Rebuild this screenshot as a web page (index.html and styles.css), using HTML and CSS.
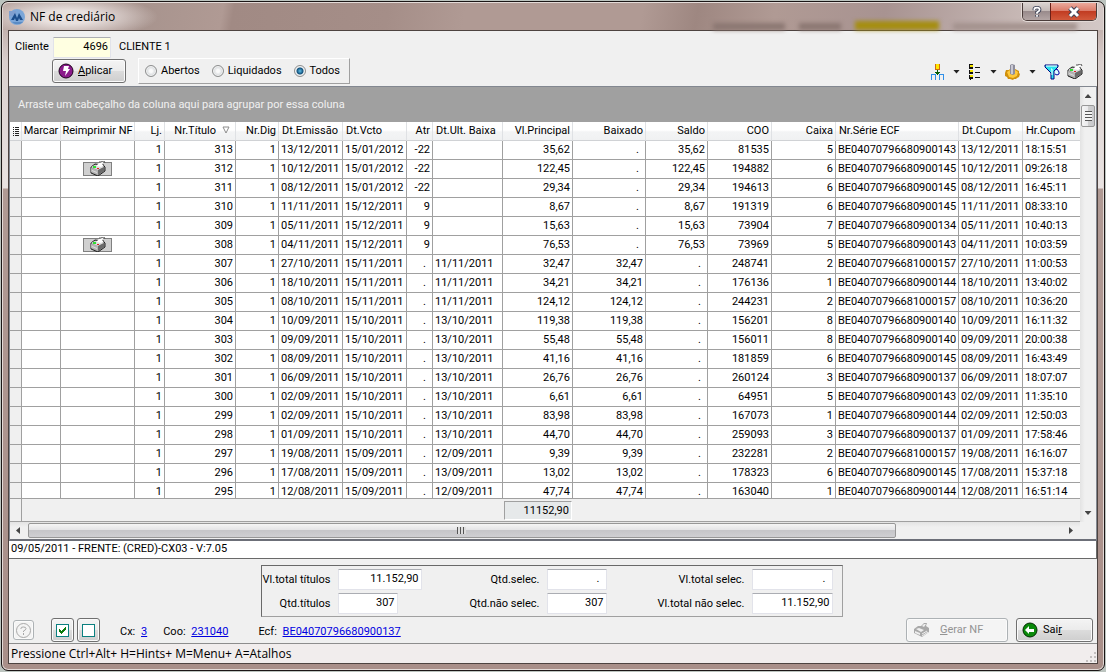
FILE: index.html
```html
<!DOCTYPE html>
<html lang="pt-BR">
<head>
    <meta charset="UTF-8">
    <meta name="viewport" content="width=device-width, initial-scale=1.0">
    <title>NF de crediário</title>
    <link rel="stylesheet" href="styles.css">
</head>
<body>

<!-- Shared icons -->
<svg class="icon-defs" aria-hidden="true">
    <symbol id="printer" viewBox="0 0 16 15">
        <path d="M1 6l4-3 8 1 2 2v4l-7 5-7-3z" fill="#9a9a9a" stroke="#222"/>
        <path d="M1 6l4-2 9 2-6 3z" fill="#dcdcdc"/>
        <path d="M1 7l7 2v5l-7-3z" fill="#b4b4b4"/>
        <path d="M8 9l6-3v4l-6 4z" fill="#6b6b6b"/>
        <path d="M6 5l3-3 5-2-2 3 2 2-3 1z" fill="#fff"/>
        <path d="M9 1h2l2-1h1l1 2M13 3l1 2" fill="none" stroke="#555"/>
        <path d="M3 5h3v2H3z" fill="#2fe02f"/>
        <path d="M7 7h2v1H7z" fill="#e02020"/>
        <path d="M2 9l5 2v1L2 10z" fill="#ddd"/>
    </symbol>
    <symbol id="printer-off" viewBox="0 0 17 16">
        <path d="M1 7l4-3h3l3-3h3l-1 3 3 2v4l-7 5-8-4z" fill="#a9a9a9"/>
        <path d="M3 7l3-1 5 2-3 2zM2 9l5 2v2l-5-2zM9 4l2-2h2l-2 3z" fill="#efefef"/>
        <path d="M9 12l5-3M9 14l6-4" stroke="#efefef"/>
    </symbol>
</svg>

<div class="window">
    <header class="titlebar">
        <svg class="app-icon" viewBox="0 0 16 16">
            <circle cx="8" cy="8" r="8" fill="#7ba6d8"/>
            <path d="M0 2h7v5H0z" fill="#7f9fcf"/>
            <path d="M2 11l4-7 2 5 2-5 4 7h-3l-1-2-1 3H7L6 9l-1 2z" fill="#1c4e8c"/>
            <path d="M3 13h11l-3 2H6z" fill="#5a8bc4"/>
        </svg>
        <h1>NF de crediário</h1>
        <div class="behind">
            <span class="smudge"></span>
            <span class="smudge short"></span>
            <span class="smudge yellow"></span>
            <span class="smudge wide"></span>
        </div>
        <div class="caption-buttons">
            <button class="caption-help" type="button" aria-label="Ajuda">
                <svg width="12" height="14" viewBox="0 -1 12 16"><path d="M3 5V3.500Q3 2 6 2t3 2.500Q9 6 6 7.500V9M6 10.500v2" fill="none" stroke="#3c4257" stroke-width="4"/><path d="M3 5V3.500Q3 2 6 2t3 2.500Q9 6 6 7.500V9M6 10.500v2" fill="none" stroke="#fff" stroke-width="2"/></svg>
            </button>
            <button class="caption-close" type="button" aria-label="Fechar">
                <svg width="14" height="12" viewBox="0 0 14 12"><path d="M3 2l8 8M11 2l-8 8" stroke="#3c4257" stroke-width="5"/><path d="M3 2l8 8M11 2l-8 8" stroke="#fff" stroke-width="3"/></svg>
            </button>
        </div>
    </header>

    <main class="client">
        <!-- Filter -->
        <form class="filter" onsubmit="return false">
            <div class="filter-row">
                <label for="cliente">Cliente</label>
                <input id="cliente" class="field cliente" type="text" value="4696">
                <span>CLIENTE 1</span>
            </div>
            <div class="filter-row second">
                <button class="btn aplicar" type="submit">
                    <svg width="16" height="16" viewBox="0 0 16 16">
                        <circle cx="8" cy="8" r="7" fill="#8b1a8b" stroke="#1c001c"/>
                        <path d="M6 3h5l-1 3h2l-5 7 1-5H5z" fill="#fff"/>
                    </svg>
                    <span><u>A</u>plicar</span>
                </button>
                <div class="radios">
                    <label><input type="radio" name="tipo">Abertos</label>
                    <label><input type="radio" name="tipo">Liquidados</label>
                    <label><input type="radio" name="tipo" checked>Todos</label>
                </div>
                <div class="toolbar">
                    <button type="button" aria-label="Agrupar">
                        <svg width="13" height="16" viewBox="0 0 13 16" shape-rendering="crispEdges">
                            <path d="M4 0h5v6H4z" fill="#d06a10"/><path d="M5 0h3v5H5z" fill="#ffe800"/>
                            <path d="M6 6h1v2h2v1H8v1H5V9H4V8h2z" fill="#075c07"/>
                            <path d="M0 10h5v6H4v-5H1v5H0zM8 10h5v6h-1v-5H9v5H8z" fill="#2f8fe8"/>
                            <path d="M6 10h1v1H6z" fill="#075c07"/>
                        </svg>
                    </button>
                    <button type="button" class="drop" aria-label="Opções de grupo"></button>
                    <button type="button" aria-label="Colunas">
                        <svg width="13" height="16" viewBox="0 0 13 16" shape-rendering="crispEdges">
                            <path d="M1 0h4v5H1zM1 6h4v4H1zM1 11h4v4H1z" fill="#111"/>
                            <path d="M2 1h3v2H2zM2 6h3v2H2zM2 11h3v2H2z" fill="#f5e400"/>
                            <path d="M2 15h1v1H2zM7 3h5v1H7zM7 8h5v1H7zM7 13h5v1H7z" fill="#111"/>
                        </svg>
                    </button>
                    <button type="button" class="drop" aria-label="Opções de colunas"></button>
                    <button type="button" aria-label="Configurar">
                        <svg width="15" height="16" viewBox="0 0 15 16">
                            <path d="M1 6l3 0 1-1h5l2 1 2 1v2l1 1-1 3-2 1-1 1H9l-1 1-3-1-2 0-1-2-2-1V9z" fill="#d0900c"/>
                            <path d="M2 8l3-2h5l3 2-1 4-4 2-4-1z" fill="#ffc93b"/>
                            <path d="M5 1l2-1 3 1v9l-2 1-3-1z" fill="#8e8e9c"/>
                            <path d="M6 1h2v9H6z" fill="#c9c9d4"/>
                        </svg>
                    </button>
                    <button type="button" class="drop" aria-label="Opções de configuração"></button>
                    <button type="button" aria-label="Filtrar">
                        <svg width="16" height="16" viewBox="0 0 16 16">
                            <path d="M1 1h13v2l-4 4v8H7V9L1 3z" fill="#28e3ee" stroke="#000080"/>
                            <path d="M2 2h11" stroke="#fff"/>
                            <path d="M7 5h1v6" stroke="#fff" fill="none"/>
                            <path d="M11 6l2-1 2 3v2l-2 1-2-1" fill="#dff" stroke="#0000a0"/>
                        </svg>
                    </button>
                    <button type="button" class="tool-print" aria-label="Imprimir"><svg width="16" height="15"><use href="#printer"/></svg></button>
                </div>
            </div>
        </form>

        <!-- Grid -->
        <section class="grid">
            <div class="grid-top">
                <div class="grid-main">
                    <div class="group-bar">Arraste um cabeçalho da coluna aqui para agrupar por essa coluna</div>
                    <div class="grid-body">
                        <table>
                            <colgroup>
                                <col class="w12"><col class="w39"><col class="w74"><col class="w30"><col class="w71">
                                <col class="w43"><col class="w64"><col class="w64"><col class="w26"><col class="w70">
                                <col class="w70"><col class="w73"><col class="w62"><col class="w64"><col class="w64">
                                <col class="w123"><col class="w64"><col>
                            </colgroup>
                            <thead>
                                <tr>
                                    <th aria-label="Indicador"><svg width="7" height="9" viewBox="0 0 7 9" shape-rendering="crispEdges"><path d="M0 0h1v1H0zM0 2h1v1H0zM0 4h1v1H0zM0 6h1v1H0zM0 8h1v1H0zM2 0h4v1H2zM2 2h4v1H2zM2 4h4v1H2zM2 6h4v1H2zM2 8h4v1H2z" fill="#222"/></svg></th>
                                    <th class="center">Marcar</th>
                                    <th class="center">Reimprimir NF</th>
                                    <th class="num">Lj.</th>
                                    <th class="num sorted">Nr.Título<svg width="8" height="8" viewBox="0 0 8 8"><path d="M1 1h6L4 7z" fill="#fff" stroke="#8c8c8c"/></svg></th>
                                    <th class="num">Nr.Dig</th>
                                    <th>Dt.Emissão</th>
                                    <th>Dt.Vcto</th>
                                    <th class="num">Atr</th>
                                    <th>Dt.Ult. Baixa</th>
                                    <th class="num">Vl.Principal</th>
                                    <th class="num">Baixado</th>
                                    <th class="num">Saldo</th>
                                    <th class="num">COO</th>
                                    <th class="num">Caixa</th>
                                    <th>Nr.Série ECF</th>
                                    <th>Dt.Cupom</th>
                                    <th>Hr.Cupom</th>
                                </tr>
                            </thead>
                            <tbody id="titulos"></tbody>
                            <tfoot>
                                <tr>
                                    <td></td>
                                    <td colspan="9"></td>
                                    <td><div class="sum">11152,90</div></td>
                                    <td colspan="7"></td>
                                </tr>
                            </tfoot>
                        </table>
                    </div>
                </div>
                <div class="vscroll">
                    <i class="arrow up"></i>
                    <div class="thumb"></div>
                    <i class="arrow down"></i>
                </div>
            </div>
            <div class="hscroll">
                <i class="arrow left"></i>
                <div class="track"><div class="thumb"></div></div>
                <i class="arrow right"></i>
            </div>
        </section>

        <div class="info">09/05/2011 - FRENTE: (CRED)-CX03 - V:7.05</div>

        <!-- Totals -->
        <section class="totals">
            <label for="vlTitulos">Vl.total títulos</label>
            <input id="vlTitulos" class="field" type="text" value="11.152,90" readonly>
            <label for="qtdSelec">Qtd.selec.</label>
            <input id="qtdSelec" class="field dot" type="text" value="." readonly>
            <label for="vlSelec">Vl.total selec.</label>
            <input id="vlSelec" class="field dot" type="text" value="." readonly>
            <label for="qtdTitulos">Qtd.títulos</label>
            <input id="qtdTitulos" class="field short" type="text" value="307" readonly>
            <label for="qtdNaoSelec">Qtd.não selec.</label>
            <input id="qtdNaoSelec" class="field" type="text" value="307" readonly>
            <label for="vlNaoSelec">Vl.total não selec.</label>
            <input id="vlNaoSelec" class="field" type="text" value="11.152,90" readonly>
        </section>

        <div class="actions">
            <button class="btn help" type="button" disabled aria-label="Ajuda">
                <svg width="17" height="17" viewBox="0 0 17 17"><circle cx="8.500" cy="8.500" r="7" fill="none" stroke="#a8a8a8"/><path d="M6 7V6q0-1 2.500-1T11 6.500Q11 8 8.500 9v1M8.500 11v2" fill="none" stroke="#a8a8a8"/></svg>
            </button>
            <button class="btn square" type="button" aria-label="Marcar todos">
                <svg width="13" height="13" viewBox="0 0 13 13" shape-rendering="crispEdges"><path d="M0 0h13v13H0z" fill="#0a8080"/><path d="M1 1h11v11H1z" fill="#fff"/><path d="M3 5h1v1h1v1h1V6h1V5h1V4h1V3h1v3H9v1H8v1H7v1H6v1H5V9H4V8H3z" fill="#0b7a0b"/></svg>
            </button>
            <button class="btn square" type="button" aria-label="Desmarcar todos">
                <svg width="13" height="13" viewBox="0 0 13 13" shape-rendering="crispEdges"><path d="M0 0h13v13H0z" fill="#0a8080"/><path d="M1 1h11v11H1z" fill="#fff"/></svg>
            </button>
            <div class="refs">
                <span>Cx: <a href="#">3</a></span>
                <span>Coo: <a href="#">231040</a></span>
                <span class="ecf">Ecf: <a href="#">BE04070796680900137</a></span>
            </div>
            <button class="btn gerar" type="button" disabled>
                <svg width="17" height="16"><use href="#printer-off"/></svg>
                <span><u>G</u>erar NF</span>
            </button>
            <button class="btn sair" type="button">
                <svg width="16" height="16" viewBox="0 0 16 16"><circle cx="8" cy="8" r="7" fill="#0a8a0a" stroke="#022d02"/><path d="M3 8l4-4v3h5v3H7v2z" fill="#fff"/></svg>
                <span>Sai<u>r</u></span>
            </button>
        </div>

        <footer class="status">
            <span>Pressione Ctrl+Alt+ H=Hints+ M=Menu+ A=Atalhos</span>
            <svg class="grip" width="10" height="10" viewBox="0 0 10 10"><path d="M8 0h2v2H8zM4 4h2v2H4zM8 4h2v2H8zM0 8h2v2H0zM4 8h2v2H4zM8 8h2v2H8z" fill="#c3bfbf"/></svg>
        </footer>
    </main>
</div>

<script>
// titulo, emissao, vcto, atr, ult. baixa, principal, baixado, saldo, coo, caixa, serie, cupom, reimprimir
var titulos = [
    ['313', '13/12/2011', '15/01/2012', '-22', '', '35,62', '.', '35,62', '81535', '5', 'BE04070796680900143', '18:15:51'],
    ['312', '10/12/2011', '15/01/2012', '-22', '', '122,45', '.', '122,45', '194882', '6', 'BE04070796680900145', '09:26:18', true],
    ['311', '08/12/2011', '15/01/2012', '-22', '', '29,34', '.', '29,34', '194613', '6', 'BE04070796680900145', '16:45:11'],
    ['310', '11/11/2011', '15/12/2011', '9', '', '8,67', '.', '8,67', '191319', '6', 'BE04070796680900145', '08:33:10'],
    ['309', '05/11/2011', '15/12/2011', '9', '', '15,63', '.', '15,63', '73904', '7', 'BE04070796680900134', '10:40:13'],
    ['308', '04/11/2011', '15/12/2011', '9', '', '76,53', '.', '76,53', '73969', '5', 'BE04070796680900143', '10:03:59', true],
    ['307', '27/10/2011', '15/11/2011', '.', '11/11/2011', '32,47', '32,47', '.', '248741', '2', 'BE04070796681000157', '11:00:53'],
    ['306', '18/10/2011', '15/11/2011', '.', '11/11/2011', '34,21', '34,21', '.', '176136', '1', 'BE04070796680900144', '13:40:02'],
    ['305', '08/10/2011', '15/11/2011', '.', '11/11/2011', '124,12', '124,12', '.', '244231', '2', 'BE04070796681000157', '10:36:20'],
    ['304', '10/09/2011', '15/10/2011', '.', '13/10/2011', '119,38', '119,38', '.', '156201', '8', 'BE04070796680900140', '16:11:32'],
    ['303', '09/09/2011', '15/10/2011', '.', '13/10/2011', '55,48', '55,48', '.', '156011', '8', 'BE04070796680900140', '20:00:38'],
    ['302', '08/09/2011', '15/10/2011', '.', '13/10/2011', '41,16', '41,16', '.', '181859', '6', 'BE04070796680900145', '16:43:49'],
    ['301', '06/09/2011', '15/10/2011', '.', '13/10/2011', '26,76', '26,76', '.', '260124', '3', 'BE04070796680900137', '18:07:07'],
    ['300', '02/09/2011', '15/10/2011', '.', '13/10/2011', '6,61', '6,61', '.', '64951', '5', 'BE04070796680900143', '11:35:10'],
    ['299', '02/09/2011', '15/10/2011', '.', '13/10/2011', '83,98', '83,98', '.', '167073', '1', 'BE04070796680900144', '12:50:03'],
    ['298', '01/09/2011', '15/10/2011', '.', '13/10/2011', '44,70', '44,70', '.', '259093', '3', 'BE04070796680900137', '17:58:46'],
    ['297', '19/08/2011', '15/09/2011', '.', '12/09/2011', '9,39', '9,39', '.', '232281', '2', 'BE04070796681000157', '16:16:07'],
    ['296', '17/08/2011', '15/09/2011', '.', '13/09/2011', '13,02', '13,02', '.', '178323', '6', 'BE04070796680900145', '15:37:18'],
    ['295', '12/08/2011', '15/09/2011', '.', '12/09/2011', '47,74', '47,74', '.', '163040', '1', 'BE04070796680900144', '16:51:14']
];

function num(v) {
    return '<td class="num' + (v === '.' ? ' dot' : '') + '">' + v + '</td>';
}

function txt(v) {
    return '<td>' + v + '</td>';
}

document.getElementById('titulos').innerHTML = titulos.map(function(t) {
    var print = t[12] ? '<button class="reprint" type="button" aria-label="Reimprimir ' + t[0] + '"><svg width="16" height="15"><use href="#printer"/></svg></button>' : '';
    return '<tr><td></td><td></td><td class="center">' + print + '</td>' +
        num('1') + num(t[0]) + num('1') + txt(t[1]) + txt(t[2]) + num(t[3]) + txt(t[4]) +
        num(t[5]) + num(t[6]) + num(t[7]) + num(t[8]) + num(t[9]) +
        txt(t[10]) + txt(t[1]) + txt(t[11]) + '</tr>';
}).join('');
</script>

</body>
</html>
```

FILE: styles.css
```css
/* General styles */
* {
    box-sizing: border-box;
}

body {
    margin: 0;
    padding: 1px;
    height: 100vh;
    background-color: #bcc4bf;
    font-family: Roboto, "Liberation Sans", Arial, sans-serif;
    font-size: 11px;
    line-height: 14px;
    color: #000;
}

button, input {
    font: inherit;
    color: inherit;
}

button {
    padding: 0;
}

svg {
    display: block;
    flex: none;
}

.icon-defs {
    position: absolute;
    width: 0;
    height: 0;
}

/* Window frame */
.window {
    display: flex;
    flex-direction: column;
    height: 100%;
    padding: 0 6px 6px;
    border: 1px solid #1b1616;
    border-radius: 7px;
    background: linear-gradient(#b09a94 0, #d9cfcd 60px, #e9e3e2 186px, #b09a94 187px, #a98f89 100%);
    box-shadow: inset 0 0 0 1px #e3dad7;
    overflow: hidden;
}

.titlebar {
    position: relative;
    display: flex;
    align-items: center;
    height: 28px;
    margin: 0 -5px;
    padding-left: 6px;
    background:
        radial-gradient(ellipse 90px 22px at 65px 14px, #e9e1df 30%, transparent),
        linear-gradient(100deg, #b5a19c 0, #a8948e 13%, #b09a94 20%, #a18a84 21%, #a58e88 35%, #b09a94 42%, #b09a94 58%, #9e8781 63%, #b09a94 70%, #a89391 80%, #c6b7b4 92%, #d3c8c6 100%);
    border-top: 1px solid #e3dad7;
    border-radius: 6px 6px 0 0;
}

.app-icon {
    width: 16px;
    height: 16px;
}

.titlebar h1 {
    margin: 0 0 0 5px;
    font: 12px/18px "Open Sans", "Noto Sans", sans-serif;
}

/* Text of the window behind, seen through the glass */
.behind {
    position: absolute;
    right: 26px;
    bottom: 0;
    display: flex;
    align-items: flex-end;
    gap: 14px;
    filter: blur(2px);
}

.smudge {
    width: 72px;
    height: 7px;
    background-color: #8b7772;
}

.smudge.short {
    width: 42px;
}

.smudge.yellow {
    width: 84px;
    height: 9px;
    background-color: #a58e10;
}

.smudge.wide {
    width: 124px;
    background-color: #a3928e;
}

.caption-buttons {
    position: relative;
    display: flex;
    align-self: flex-start;
    height: 18px;
    margin-left: auto;
    margin-right: 6px;
    border: 1px solid #4a3c3a;
    border-top: 0;
    border-radius: 0 0 5px 5px;
    box-shadow: 0 0 0 1px #e3dad7;
    overflow: hidden;
}

.caption-buttons button {
    display: flex;
    align-items: center;
    justify-content: center;
    border: 0;
}

.caption-help {
    width: 27px;
    background: linear-gradient(#d9d2cf 0, #c4bab7 45%, #97898a 46%, #b3a5a4 100%);
}

.caption-close {
    width: 46px;
    background: linear-gradient(#eba99b 0, #dc7d6b 45%, #c03a20 46%, #d25a3c 100%);
}

.caption-buttons .caption-close {
    border-left: 1px solid #6b2018;
}

.client {
    display: flex;
    flex-direction: column;
    flex: 1;
    min-height: 0;
    border: 1px solid #4d4340;
    background-color: #f0f0f0;
}

/* Fields and buttons */
.field {
    width: 100%;
    height: 21px;
    padding: 0 2px 2px;
    border: 1px solid #e2e3ea;
    border-top-color: #abadb3;
    border-radius: 1px;
    background-color: #fff;
    text-align: right;
}

.btn {
    display: flex;
    align-items: center;
    height: 24px;
    border: 1px solid #707070;
    border-radius: 3px;
    background: linear-gradient(#f4f4f4 0, #ebebeb 50%, #dcdcdc 51%, #cecece 100%);
    box-shadow: inset 0 0 0 1px #fbfbfb;
}

.btn:disabled {
    border-color: #adb2b5;
    background: #f4f4f4;
    color: #939393;
}

/* Filter */
.filter {
    height: 55px;
    padding: 6px 14px 0 6px;
}

.filter-row {
    display: flex;
    align-items: center;
    height: 20px;
}

.filter-row .cliente {
    width: 58px;
    margin: 0 8px 0 6px;
    background-color: #ffffe1;
}

.filter-row label[for] {
    width: 32px;
}

.filter-row.second {
    height: 27px;
    padding-left: 37px;
}

.aplicar {
    width: 74px;
    gap: 4px;
    padding-left: 5px;
}

.radios {
    display: flex;
    align-items: center;
    gap: 12px;
    height: 26px;
    margin-left: 12px;
    padding: 0 9px 0 6px;
    border: 1px solid #fff;
    border-right-color: #a0a0a0;
    border-bottom-color: #a0a0a0;
}

.radios label {
    display: flex;
    align-items: center;
    gap: 4px;
}

.radios input {
    appearance: none;
    width: 12px;
    height: 12px;
    margin: 0;
    border: 1px solid #8e8f8f;
    border-radius: 50%;
    background: radial-gradient(#fafafa 20%, #cfd3d6 70%);
    box-shadow: inset 0 0 0 1px #f4f4f4;
}

.radios input:checked {
    background: radial-gradient(circle, #5fc0e8 0, #12507c 3px, #dfe5e8 4px);
}

.toolbar {
    display: flex;
    align-items: center;
    margin-left: auto;
    padding-top: 2px;
}

.toolbar button {
    border: 0;
    background: none;
}

.toolbar .drop {
    width: 7px;
    height: 4px;
    margin: 0 8px 0 9px;
    background-color: #222;
    clip-path: polygon(0 0, 100% 0, 50% 100%);
}

.toolbar .tool-print {
    margin-left: 7px;
}

/* Grid */
.grid {
    display: flex;
    flex-direction: column;
    flex: 1;
    min-height: 0;
    border: 1px solid #828790;
    border-bottom: 2px solid #6c6f78;
}

.grid-top {
    display: flex;
    flex: 1;
    min-height: 0;
}

.grid-main {
    display: flex;
    flex-direction: column;
    flex: 1;
    min-width: 0;
}

.group-bar {
    height: 35px;
    padding-left: 8px;
    background-color: #a0a0a0;
    color: #f0f0f0;
    line-height: 35px;
}

.grid-body {
    flex: 1;
    min-height: 0;
    overflow: hidden;
    background-color: #f0f0f0;
}

table {
    width: 100%;
    table-layout: fixed;
    border-collapse: separate;
    border-spacing: 0;
}

.w12 { width: 12px; }
.w26 { width: 26px; }
.w30 { width: 30px; }
.w39 { width: 39px; }
.w43 { width: 43px; }
.w62 { width: 62px; }
.w64 { width: 64px; }
.w70 { width: 70px; }
.w71 { width: 71px; }
.w73 { width: 73px; }
.w74 { width: 74px; }
.w123 { width: 123px; }

th {
    position: sticky;
    top: 0;
    height: 19px;
    padding: 0 2px 0 3px;
    border-right: 1px solid #dfe1e4;
    border-bottom: 1px solid #d0d2d5;
    background: linear-gradient(#fff 0, #fff 45%, #f3f4f5 55%, #f0f1f2 100%);
    font-weight: normal;
    text-align: left;
    white-space: nowrap;
}

tbody td {
    height: 19px;
    padding: 0 2px;
    border-right: 1px solid #a0a0a0;
    border-bottom: 1px solid #a0a0a0;
    background-color: #fff;
    white-space: nowrap;
}

th:last-child,
tbody td:last-child {
    border-right: 0;
}

tbody td:first-child {
    background-color: #f0f0f0;
}

th.num,
td.num {
    text-align: right;
}

th.center,
td.center {
    padding: 0;
    text-align: center;
}

td.dot {
    padding-right: 6px;
}

.sorted svg {
    display: inline-block;
    margin: 0 3px 0 6px;
}

.reprint {
    display: flex;
    justify-content: center;
    width: 29px;
    height: 14px;
    margin: 0 auto;
    border: 1px solid #808080;
    background-color: #d0d0d0;
}

.reprint svg {
    margin-top: -2px;
}

tfoot td {
    position: sticky;
    bottom: 0;
    height: 24px;
    padding: 0;
    border-top: 1px solid #a0a0a0;
    border-bottom: 1px solid #a0a0a0;
    background-color: #f0f0f0;
}

tfoot td:first-child {
    border-right: 1px solid #a0a0a0;
}

.sum {
    height: 19px;
    margin: 0 1px;
    padding-right: 2px;
    border: 1px solid #fff;
    border-top-color: #a0a0a0;
    border-left-color: #a0a0a0;
    background-color: #e6e9ea;
    line-height: 18px;
    text-align: right;
}

/* Scroll bars */
.vscroll {
    display: flex;
    flex-direction: column;
    align-items: center;
    width: 16px;
    padding: 7px 0;
    background: linear-gradient(90deg, #e3e3e3, #f0f0f0 30%);
}

.vscroll .thumb {
    width: 14px;
    height: 22px;
    margin-top: 7px;
    border: 1px solid #979797;
    border-radius: 2px;
    background:
        repeating-linear-gradient(#555 0 1px, #f4f4f4 1px 3px) center / 7px 10px no-repeat,
        linear-gradient(90deg, #f5f5f5, #e9e9eb 50%, #d0d0d0 51%, #c8c8cc);
}

.arrow {
    width: 7px;
    height: 4px;
    background-color: #444;
}

.arrow.up {
    clip-path: polygon(50% 0, 100% 100%, 0 100%);
}

.arrow.down {
    margin-top: auto;
    clip-path: polygon(0 0, 100% 0, 50% 100%);
}

.arrow.left,
.arrow.right {
    width: 4px;
    height: 7px;
}

.arrow.left {
    clip-path: polygon(100% 0, 100% 100%, 0 50%);
}

.arrow.right {
    clip-path: polygon(0 0, 100% 50%, 0 100%);
}

.hscroll {
    display: flex;
    align-items: center;
    height: 17px;
    margin-right: 16px;
    padding: 0 7px 0 6px;
    background: linear-gradient(#e3e3e3, #f0f0f0 30%);
}

.hscroll .track {
    flex: 1;
    margin: 0 8px;
}

.hscroll .thumb {
    width: 84%;
    height: 15px;
    border: 1px solid #979797;
    border-radius: 2px;
    background:
        repeating-linear-gradient(90deg, #555 0 1px, #ddd 1px 3px) center / 9px 7px no-repeat,
        linear-gradient(#f5f5f5, #e4e4e6 45%, #c6c6c9 50%, #cfcfd2);
}

.info {
    height: 18px;
    padding-left: 2px;
    border-right: 1px solid #696969;
    border-bottom: 1px solid #696969;
    background-color: #fff;
    line-height: 16px;
}

/* Totals */
.totals {
    display: grid;
    grid-template-columns: 69px 84px 111px 60px 131px 81px;
    gap: 3px 7px;
    align-items: center;
    align-self: center;
    margin: 6px 3px 0 0;
    padding: 3px 9px 2px 0;
    border: 1px solid #696969;
    border-right-color: #a0a0a0;
    border-bottom-color: #a0a0a0;
}

.totals label {
    text-align: right;
    white-space: nowrap;
}

.totals .short {
    width: 60px;
}

.totals .dot {
    padding-right: 6px;
}

/* Bottom buttons */
.actions {
    display: flex;
    align-items: center;
    height: 26px;
    padding: 0 4px;
}

.help {
    justify-content: center;
    width: 21px;
    height: 20px;
    margin-right: 17px;
}

.square {
    justify-content: center;
    width: 23px;
    margin-right: 3px;
}

.refs {
    display: flex;
    gap: 16px;
    margin: 3px auto 0 17px;
}

.refs a {
    margin-left: 3px;
    color: #0000e0;
}

.refs .ecf {
    margin-left: 14px;
}

.gerar {
    gap: 10px;
    width: 102px;
    margin-right: 8px;
    padding-left: 6px;
}

.sair {
    gap: 5px;
    width: 77px;
    padding-left: 5px;
}

/* Status bar */
.status {
    display: flex;
    align-items: center;
    justify-content: space-between;
    height: 20px;
    padding-left: 2px;
    border-top: 1px solid #8d8d8d;
    background-color: #f1eded;
    font: 12px/18px "Open Sans", "Noto Sans", sans-serif;
}

.grip {
    align-self: flex-end;
    margin: 0 1px 1px 0;
}
```
